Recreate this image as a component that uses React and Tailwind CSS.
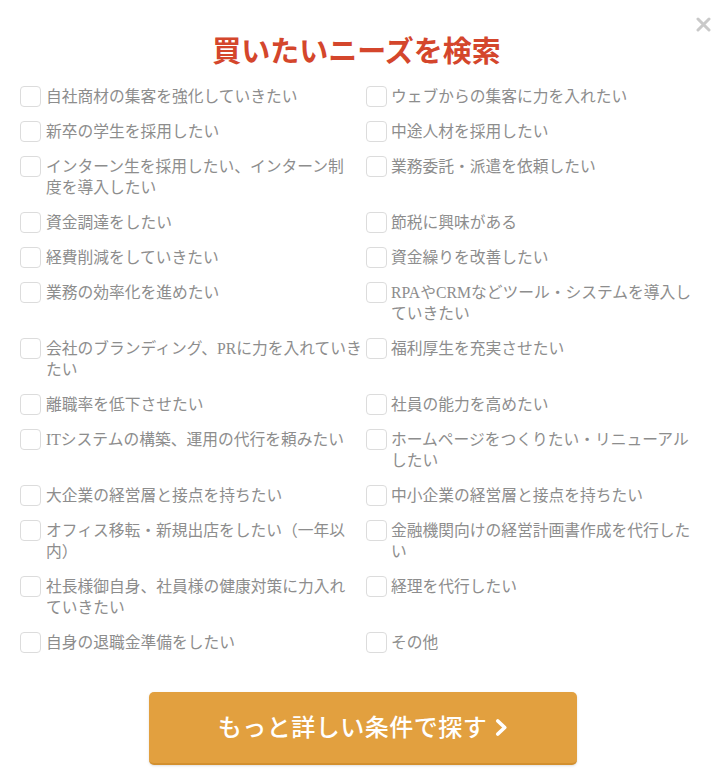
import React from "react";

const needs = [
  ["自社商材の集客を強化していきたい"],
  ["ウェブからの集客に力を入れたい"],
  ["新卒の学生を採用したい"],
  ["中途人材を採用したい"],
  ["インターン生を採用したい、インターン制", "度を導入したい"],
  ["業務委託・派遣を依頼したい"],
  ["資金調達をしたい"],
  ["節税に興味がある"],
  ["経費削減をしていきたい"],
  ["資金繰りを改善したい"],
  ["業務の効率化を進めたい"],
  ["RPAやCRMなどツール・システムを導入し", "ていきたい"],
  ["会社のブランディング、PRに力を入れていき", "たい"],
  ["福利厚生を充実させたい"],
  ["離職率を低下させたい"],
  ["社員の能力を高めたい"],
  ["ITシステムの構築、運用の代行を頼みたい"],
  ["ホームページをつくりたい・リニューアル", "したい"],
  ["大企業の経営層と接点を持ちたい"],
  ["中小企業の経営層と接点を持ちたい"],
  ["オフィス移転・新規出店をしたい（一年以", "内）"],
  ["金融機関向けの経営計画書作成を代行した", "い"],
  ["社長様御自身、社員様の健康対策に力入れ", "ていきたい"],
  ["経理を代行したい"],
  ["自身の退職金準備をしたい"],
  ["その他"],
];

const Need = ({ lines, right }) => (
  <label className={`flex items-start cursor-pointer ${right ? "gap-[4px]" : "gap-[5px]"}`}>
    <span className="w-[21px] h-[21px] shrink-0 rounded-[4px] border border-[#dcdcdc] bg-white" />
    <span className="text-[15.75px] leading-[21px] text-[#8d8d8d] whitespace-nowrap">
      {lines.map((l, i) => (
        <React.Fragment key={i}>
          {i > 0 && <br />}
          {l}
        </React.Fragment>
      ))}
    </span>
  </label>
);

export default function App() {
  return (
    <div
      className="relative w-[720px] h-[778px] bg-white overflow-hidden"
      style={{ fontFamily: '"Liberation Serif", "Noto Sans CJK JP", serif' }}
    >
      {/* close */}
      <button className="absolute top-[17px] right-[9px] w-[15px] h-[15px]">
        <svg viewBox="0 0 15 15" className="w-[15px] h-[15px]">
          <path d="M2 2 L13 13 M13 2 L2 13" stroke="#c9c9c9" strokeWidth="3" strokeLinecap="round" />
        </svg>
      </button>

      <div className="pt-[34px]">
        <h2 className="text-center text-[29px] leading-[36px] font-bold text-[#d4462c] pr-[7px]">
          買いたいニーズを検索
        </h2>

        <div className="mt-[16px] pl-[20px] grid grid-cols-[346px_346px] gap-y-[14px]">
          {needs.map((n, i) => (
            <Need key={i} lines={n} right={i % 2 === 1} />
          ))}
        </div>

        <div className="mt-[39px] flex justify-center pl-[6px]">
          <button className="w-[428px] h-[73px] rounded-[5px] bg-[#e2a03f] border-b-2 border-[#d3902f] flex items-center justify-center gap-[8px] text-white text-[24px] font-medium shadow-sm">
            <span className="tracking-[0.5px]">もっと詳しい条件で探す</span>
            <svg viewBox="0 0 14 20" className="w-[13px] h-[19px]">
              <path d="M3 3 L10.5 10 L3 17" fill="none" stroke="white" strokeWidth="4" strokeLinecap="round" strokeLinejoin="round" />
            </svg>
          </button>
        </div>
      </div>
    </div>
  );
}
